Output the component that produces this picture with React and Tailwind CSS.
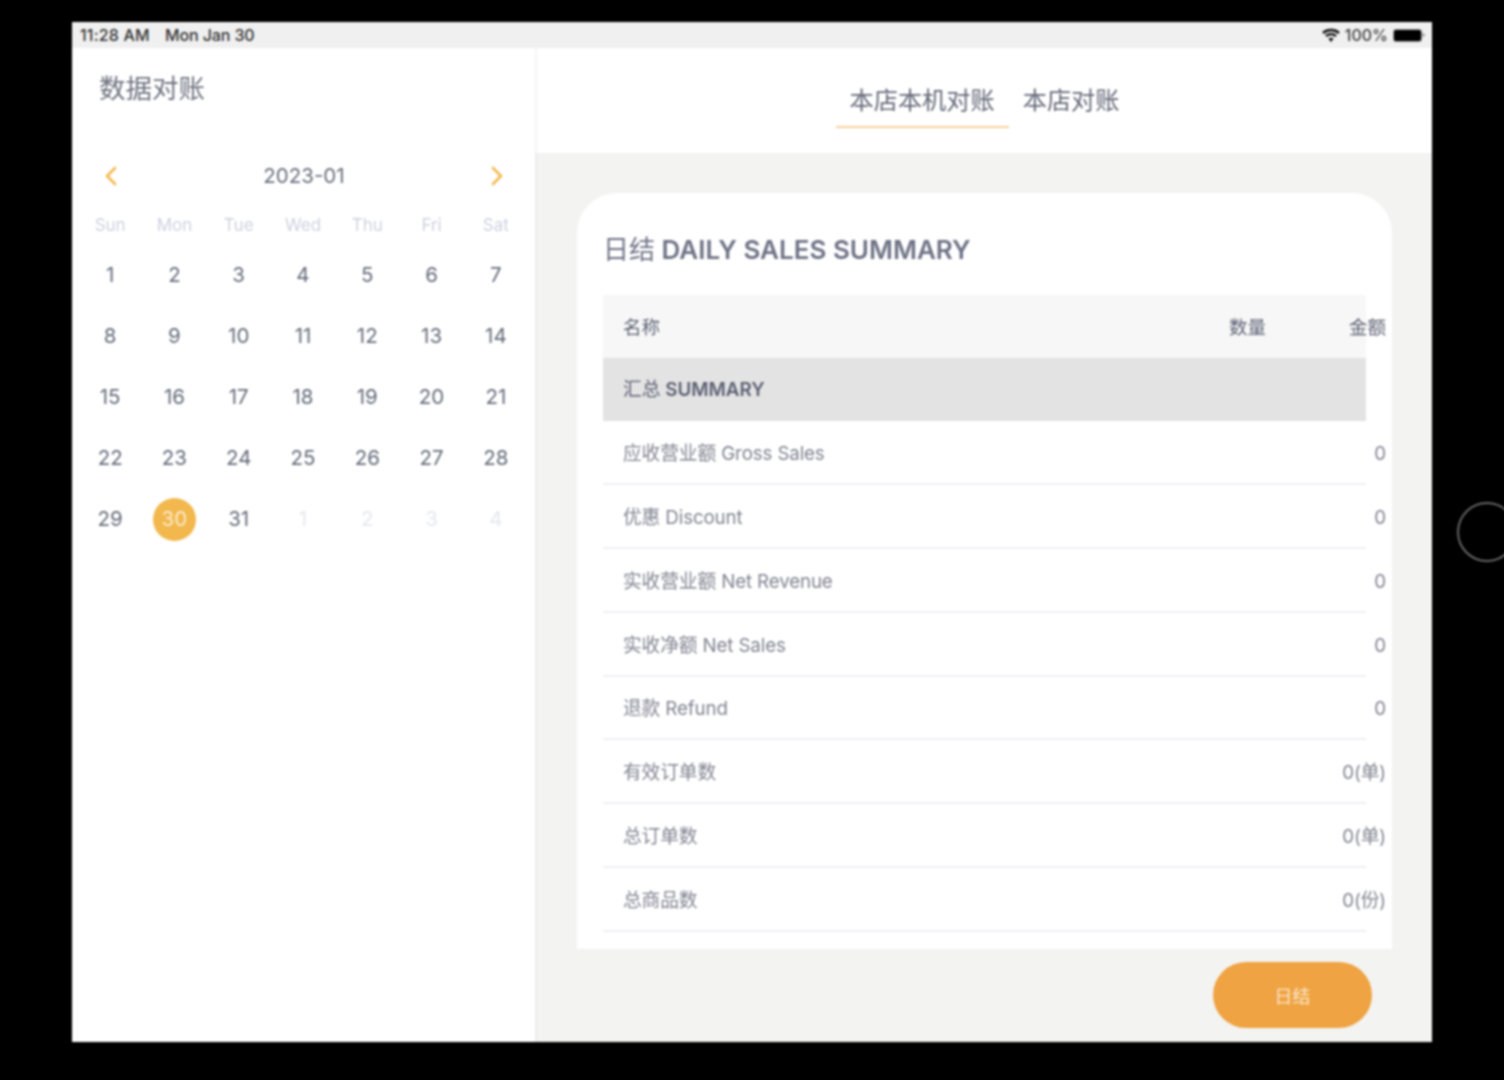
const weekdays = ["Sun", "Mon", "Tue", "Wed", "Thu", "Fri", "Sat"];

const days = [];
for (let d = 1; d <= 31; d++) days.push({ label: d });
for (let d = 1; d <= 4; d++) days.push({ label: d, muted: true });

const rows = [
  { name: "应收营业额 Gross Sales", value: "0" },
  { name: "优惠 Discount", value: "0" },
  { name: "实收营业额 Net Revenue", value: "0" },
  { name: "实收净额 Net Sales", value: "0" },
  { name: "退款 Refund", value: "0" },
  { name: "有效订单数", value: "0(单)" },
  { name: "总订单数", value: "0(单)" },
  { name: "总商品数", value: "0(份)" },
];

const StatusBar = () => (
  <div className="flex h-[26px] items-center justify-between bg-[#f0f0f0] pl-2 pr-[7px] text-[16px] font-medium text-[#333]">
    <div className="flex gap-[15px]">
      <span className="tracking-[0.2px]">11:28 AM</span>
      <span className="tracking-[-0.1px]">Mon Jan 30</span>
    </div>
    <div className="flex items-center gap-[5px]">
      <svg width="18" height="14" viewBox="0 0 18 14" fill="none" stroke="#111" strokeWidth="2.4">
        <path d="M1 5C5.5 1 12.5 1 17 5" />
        <path d="M4 8C7 5.5 11 5.5 14 8" />
        <path d="M9 14 6.4 10.6C8 9.6 10 9.6 11.6 10.6Z" fill="#111" stroke="none" />
      </svg>
      <span className="text-[#444]">100%</span>
      <div className="flex items-center">
        <div className="h-[13px] w-[29px] rounded-[3px] border border-[#999] bg-black" />
        <div className="h-1 w-[3px] rounded-r bg-[#aaa]" />
      </div>
    </div>
  </div>
);

const Arrow = ({ d }) => (
  <svg width="14" height="20" viewBox="0 0 14 20" fill="none" stroke="#f3b850" strokeWidth="2.6" strokeLinecap="round" strokeLinejoin="round">
    <path d={d} />
  </svg>
);

const Calendar = () => (
  <div className="w-[463px] shrink-0 bg-white">
    <h1 className="ml-[27px] mt-[22px] h-[36px] text-[26.5px] leading-[36px] text-[#6f7481]">数据对账</h1>
    <div className="mt-[54px] flex h-[32px] items-center justify-between pl-[32px] pr-[31px]">
      <Arrow d="M11 2 3 10 11 18" />
      <span className="text-[20.5px] text-[#666d7b]">2023-01</span>
      <Arrow d="M3 2 11 10 3 18" />
    </div>
    <div className="mt-[17px] grid grid-cols-7 pl-[6px] pr-[7px]">
      {weekdays.map((w) => (
        <div key={w} className="h-[32px] text-center text-[17px] leading-[32px] text-[#cdd2de]">
          {w}
        </div>
      ))}
    </div>
    <div className="mt-[4px] grid grid-cols-7 pl-[6px] pr-[7px]">
      {days.map((d, i) => (
        <div key={i} className="flex h-[61px] items-center justify-center">
          {d.label === 30 && !d.muted ? (
            <div className="flex h-[43px] w-[43px] items-center justify-center rounded-full bg-[#f2b84e] text-[20.5px] text-[#fbeacb]">
              30
            </div>
          ) : (
            <span className={"text-[20.5px] " + (d.muted ? "text-[#e6e8ee]" : "text-[#646b79]")}>{d.label}</span>
          )}
        </div>
      ))}
    </div>
  </div>
);

const Tabs = () => (
  <div className="flex h-[105px] justify-center border-l-2 border-[#f6f6f6] bg-white pt-[32px]">
    <div className="h-[48px] border-b-2 border-[#f8cf9c] px-[14px] text-[24.2px] leading-[42px] text-[#636878]">
      本店本机对账
    </div>
    <div className="h-[48px] px-[14px] text-[24.2px] leading-[42px] text-[#636878]">本店对账</div>
  </div>
);

const Summary = () => (
  <div className="h-[756px] overflow-hidden rounded-t-[40px] bg-white pl-[26px] pr-[26px]">
    <h2 className="mt-[37px] flex h-[38px] items-center text-[26px] font-semibold text-[#6e7285]">
      <span>
        <span className="font-normal">日结</span> DAILY SALES SUMMARY
      </span>
    </h2>
    <div className="mt-[27px] w-[763px]">
      <div className="h-[63px] bg-[#f7f7f7]">
        <div className="flex h-full w-[783px] items-center pl-5 pt-[3px] text-[18.5px] text-[#5b5f72]">
          <span>名称</span>
          <span className="ml-auto">数量</span>
          <span className="w-[120px] text-right">金额</span>
        </div>
      </div>
      <div className="flex h-[63px] items-center bg-[#e3e3e3] pl-5 pt-[2px] text-[18.75px] font-semibold text-[#5b5f72]">
        <span>
          <span className="font-normal">汇总</span> SUMMARY
        </span>
      </div>
      {rows.map((r) => (
        <div key={r.name} className="h-[63.9px] border-b-2 border-[#f0f0f5]">
          <div className="flex h-full w-[783px] items-center justify-between pl-5 pt-[4px] text-[18.75px] tracking-[-0.14px] text-[#828592]">
            <span>{r.name}</span>
            <span>{r.value}</span>
          </div>
        </div>
      ))}
    </div>
  </div>
);

const App = () => (
  <div className="relative h-[1080px] w-[1504px] overflow-hidden bg-black pl-[72px] pt-[22px] font-['Inter','Noto_Sans_CJK_SC',sans-serif]">
    <div className="flex h-[1020px] w-[1360px] flex-col blur-[0.85px]">
      <StatusBar />
      <div className="flex flex-1">
        <Calendar />
        <div className="flex flex-1 flex-col">
          <Tabs />
          <div className="flex flex-1 flex-col border-l-2 border-[#ececec] bg-[#f3f3f2] px-[40px] pt-[40px]">
            <Summary />
            <button className="mr-[20px] mt-[13px] h-[66px] w-[159px] self-end rounded-full bg-[#efa342] pt-[2px] text-[18px] text-[#fbe6c8]">
              日结
            </button>
          </div>
        </div>
      </div>
    </div>
    <div className="absolute left-[1457px] top-[502px] h-[60px] w-[60px] rounded-full border-2 border-[#666] blur-[0.85px]" />
  </div>
);

export default App;
